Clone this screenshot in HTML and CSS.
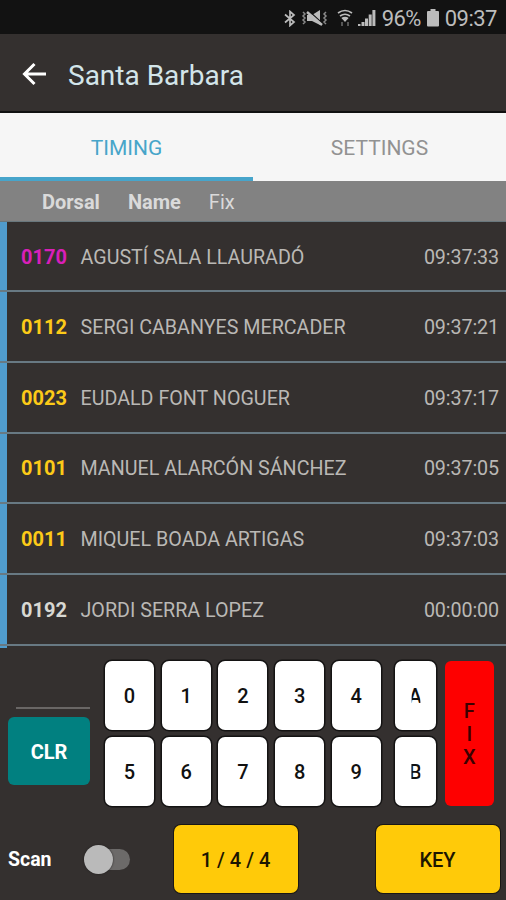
FILE: index.html
```html
<!DOCTYPE html>
<html lang="en">
<head>
    <meta charset="UTF-8">
    <meta name="viewport" content="width=device-width, initial-scale=1.0">
    <title>Santa Barbara</title>
    <link rel="stylesheet" href="styles.css">
</head>
<body>
<div class="app">
    <!-- Android status bar -->
    <div class="status-bar">
        <svg class="bluetooth" width="12" height="17" viewBox="0 0 12 17">
            <path d="M1 4.500 10 12 6 15.500V1.500l4 3.500-9 7.500"/>
        </svg>
        <svg class="mute" width="27" height="18" viewBox="0 0 27 18">
            <path class="wave" d="M2 3l2 2-2 2 2 2-2 2 2 2-2 2M25 3l-2 2 2 2-2 2 2 2-2 2 2 2"/>
            <path class="solid" d="M6 6h5l8-5v15l-8-4H6z"/>
            <path class="gap" d="M8 2l13 12"/>
            <path class="slash" d="M6 3l15 13"/>
        </svg>
        <svg class="wifi" width="16" height="18" viewBox="0 0 16 18">
            <path d="M1 4Q8-1 15 4M3 7q5-3.500 10 0M5 9.500q3-2 6 0"/>
            <path class="solid" d="M4.500 9h7L8 13z"/>
            <path class="arrows" d="M5 17v-4M11 13v4"/>
        </svg>
        <svg class="signal" width="18" height="18" viewBox="0 0 18 18">
            <path d="M0 15h2.500v2H0zM3.500 13h3v4h-3zM7 9.500h3v7.500H7zM10.700 5.500h3V17h-3zM14.400 1h3v16h-3z"/>
        </svg>
        <span class="percent">96%</span>
        <svg class="battery" width="12" height="18" viewBox="0 0 12 18">
            <path d="M3.500 0h5v2H11q1 0 1 1v13.500q0 1-1 1H1q-1 0-1-1V3q0-1 1-1h2.500z"/>
        </svg>
        <span class="clock">09:37</span>
    </div>

    <div class="header">
        <svg class="back" width="26" height="26" viewBox="0 0 26 26">
            <path d="M24 13H3M12.500 3 2.500 13l10 10"/>
        </svg>
        <h1 class="title">Santa Barbara</h1>
    </div>

    <div class="tabs">
        <div class="tab active">TIMING</div>
        <div class="tab">SETTINGS</div>
    </div>

    <div class="list-head">
        <span class="head-dorsal">Dorsal</span>
        <span class="head-name">Name</span>
        <span class="head-fix">Fix</span>
    </div>

    <div class="list">
        <div class="row">
            <span class="dorsal pink">0170</span>
            <span class="name">AGUSTÍ SALA LLAURADÓ</span>
            <span class="time">09:37:33</span>
        </div>
        <div class="row">
            <span class="dorsal yellow">0112</span>
            <span class="name">SERGI CABANYES MERCADER</span>
            <span class="time">09:37:21</span>
        </div>
        <div class="row">
            <span class="dorsal yellow">0023</span>
            <span class="name">EUDALD FONT NOGUER</span>
            <span class="time">09:37:17</span>
        </div>
        <div class="row">
            <span class="dorsal yellow">0101</span>
            <span class="name">MANUEL ALARCÓN SÁNCHEZ</span>
            <span class="time">09:37:05</span>
        </div>
        <div class="row">
            <span class="dorsal yellow">0011</span>
            <span class="name">MIQUEL BOADA ARTIGAS</span>
            <span class="time">09:37:03</span>
        </div>
        <div class="row">
            <span class="dorsal">0192</span>
            <span class="name">JORDI SERRA LOPEZ</span>
            <span class="time">00:00:00</span>
        </div>
    </div>

    <!-- Dorsal keypad -->
    <div class="keypad">
        <div class="entry">
            <div class="entry-line"></div>
            <button class="clr">CLR</button>
        </div>
        <div class="digits">
            <button class="key">0</button>
            <button class="key">1</button>
            <button class="key">2</button>
            <button class="key">3</button>
            <button class="key">4</button>
            <button class="key">5</button>
            <button class="key">6</button>
            <button class="key">7</button>
            <button class="key">8</button>
            <button class="key">9</button>
        </div>
        <div class="letters">
            <button class="key"><span class="letter-a">A</span></button>
            <button class="key"><span class="letter-b">B</span></button>
        </div>
        <button class="fix"><span>F</span><span>I</span><span>X</span></button>
    </div>

    <div class="footer">
        <span class="scan">Scan</span>
        <div class="switch"><div class="thumb"></div></div>
        <button class="action count">1 / 4 / 4</button>
        <button class="action">KEY</button>
    </div>
</div>
</body>
</html>
```
FILE: styles.css
```css
* {
    box-sizing: border-box;
}
body {
    margin: 0;
    background-color: #34302f;
    font-family: Roboto, "Liberation Sans", sans-serif;
    overflow: hidden;
}
button {
    border: none;
    padding: 0;
    font-family: inherit;
}
.app {
    width: 506px;
    height: 900px;
    display: flex;
    flex-direction: column;
    background-color: #34302f;
}

/* Status bar */
.status-bar {
    height: 34px;
    flex: none;
    display: flex;
    align-items: center;
    justify-content: flex-end;
    padding-right: 9px;
    padding-top: 2px;
    background-color: #121212;
    color: #bcbcbc;
    font-size: 22px;
}
.status-bar svg {
    fill: none;
    stroke: #bcbcbc;
    stroke-width: 1.7;
}
.status-bar .solid,
.signal path,
.battery path {
    fill: #bcbcbc;
    stroke: none;
}
.mute {
    margin-left: 5px;
}
.mute .wave {
    stroke-width: 1.5;
    stroke: #8a8a8a;
}
.mute .gap {
    stroke: #121212;
    stroke-width: 1.2;
}
.mute .slash {
    stroke-width: 2.4;
}
.wifi {
    margin-left: 9px;
}
.wifi .arrows {
    stroke: #555;
    stroke-width: 2;
}
.signal {
    margin-left: 5px;
}
.percent {
    margin-left: 6px;
    letter-spacing: -0.6px;
}
.battery {
    margin-left: 6px;
}
.clock {
    margin-left: 6px;
    letter-spacing: -0.5px;
}

/* Header */
.header {
    height: 79px;
    flex: none;
    display: flex;
    align-items: center;
    padding: 2px 0 0 22px;
    border-bottom: 2px solid #111;
}
.back {
    fill: none;
    stroke: #fff;
    stroke-width: 3;
}
.title {
    margin: 3px 0 0 20px;
    font-size: 28px;
    font-weight: 400;
    color: #d3e5ea;
}

/* Tabs */
.tabs {
    height: 68px;
    flex: none;
    display: flex;
    background-color: #f6f6f6;
}
.tab {
    width: 50%;
    padding-top: 6px;
    border-bottom: 4px solid transparent;
    display: flex;
    align-items: center;
    justify-content: center;
    font-size: 21px;
    color: #929292;
}
.tab.active {
    color: #47a5c9;
    border-bottom-color: #47a5cb;
}

/* Results */
.list-head {
    height: 41px;
    flex: none;
    display: flex;
    align-items: center;
    gap: 28px;
    padding: 2px 0 0 42px;
    background-color: #828282;
    border-bottom: 1px solid #69777d;
    color: #dadada;
    font-size: 20px;
    font-weight: 700;
}
.head-fix {
    font-weight: 400;
}
.list {
    height: 425.5px;
    flex: none;
    background: linear-gradient(to right, #509ccd 7.5px, transparent 7.5px);
}
.row {
    height: 70.7px;
    display: flex;
    align-items: center;
    padding: 1px 7px 0 21px;
    border-bottom: 2px solid #687983;
    font-size: 19.7px;
    color: #bab8b5;
}
.row:first-child {
    height: 70.2px;
    padding-top: 2px;
}
.dorsal {
    width: 59.5px;
    font-size: 20px;
    font-weight: 700;
    color: #d8d8d3;
}
.dorsal.pink {
    color: #d91fb8;
}
.dorsal.yellow {
    color: #fcca18;
}
.name {
    flex: 1;
    padding-top: 1px;
}
.time {
    padding-top: 1px;
    letter-spacing: -0.1px;
}

/* Keypad */
.keypad {
    display: flex;
    height: 145px;
    flex: none;
    margin-top: 13.5px;
    padding-left: 8px;
}
.entry {
    width: 82px;
    padding-top: 46px;
}
.entry-line {
    height: 2px;
    margin-left: 8px;
    background-color: #696665;
}
.clr {
    width: 82px;
    height: 68px;
    margin-top: 8px;
    padding-top: 1px;
    border-radius: 6px;
    background-color: #018080;
    color: #fff;
    font-size: 20px;
    font-weight: 700;
}
.digits {
    display: grid;
    grid-template-columns: repeat(5, 49px);
    grid-template-rows: repeat(2, 69px);
    gap: 7px 7.7px;
    margin-left: 15px;
}
.letters {
    display: grid;
    grid-template-columns: 41px;
    grid-template-rows: repeat(2, 69px);
    gap: 7px;
    margin-left: 14px;
}
.key {
    border-radius: 7px;
    background-color: #fff;
    box-shadow: 0 0 0 1.5px #141313;
    color: #111;
    font-size: 20px;
    font-weight: 500;
}
.letter-a {
    display: inline-block;
    clip-path: inset(0 1.5px 0 3px);
}
.letter-b {
    display: inline-block;
    clip-path: inset(0 1px 0 2.5px);
}
.fix {
    width: 49px;
    margin-left: 9px;
    padding-top: 2px;
    border-radius: 6px;
    background-color: #fe0000;
    color: #3a0000;
    display: flex;
    flex-direction: column;
    align-items: center;
    justify-content: center;
    font-size: 20px;
    font-weight: 500;
    line-height: 23px;
}

/* Footer */
.footer {
    display: flex;
    align-items: center;
    margin-top: 19px;
    padding-left: 8px;
}
.scan {
    width: 79px;
    padding-top: 1px;
    color: #fff;
    font-size: 19.5px;
    font-weight: 700;
}
.switch {
    width: 43px;
    height: 21px;
    display: flex;
    align-items: center;
    border-radius: 11px;
    background-color: #6c6a69;
}
.thumb {
    flex: none;
    width: 29px;
    height: 29px;
    margin-left: -3px;
    border-radius: 50%;
    background-color: #bababa;
    box-shadow: 0 0 2px #1d1b1b;
}
.action {
    width: 124px;
    height: 68px;
    padding-top: 2px;
    border-radius: 7px;
    background-color: #ffca09;
    box-shadow: 0 0 0 1px #191715;
    color: #1c1600;
    font-size: 20px;
    font-weight: 500;
}
.count {
    margin: 0 78px 0 43.5px;
}
```
